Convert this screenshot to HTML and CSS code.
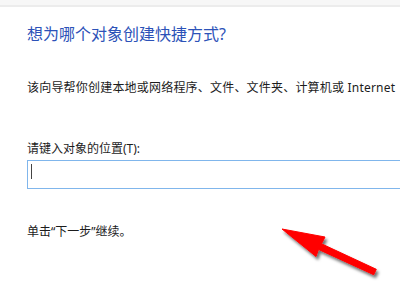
FILE: index.html
```html
<!DOCTYPE html>
<html lang="zh-CN">
<head>
    <meta charset="UTF-8">
    <title>创建快捷方式</title>
    <link rel="stylesheet" href="styles.css">
</head>
<body>
    <div class="topband"></div>

    <div class="wizard">
        <h1 class="heading">想为哪个对象创建快捷方式?</h1>

        <p class="desc">该向导帮你创建本地或网络程序、文件、文件夹、计算机或 Internet</p>

        <label class="field-label">请键入对象的位置(T):</label>
        <div class="location">
            <span class="caret"></span>
        </div>

        <p class="hint">单击“下一步”继续。</p>
    </div>

    <svg class="arrow" width="400" height="300" viewBox="0 0 400 300">
        <defs>
            <filter id="shadow" x="-20%" y="-20%" width="150%" height="160%">
                <feDropShadow dx="2" dy="3" stdDeviation="1.6" flood-color="#000" flood-opacity="0.55"/>
            </filter>
        </defs>
        <polygon points="282,229 325,237 321.5,243.8 376.3,269.3 373.7,274.7 318.5,249.4 316,256.5"
                 fill="#ff0000" stroke="#ff0000" stroke-width="1" stroke-linejoin="round" filter="url(#shadow)"/>
    </svg>
</body>
</html>
```

FILE: styles.css
```css
html, body {
    margin: 0;
    padding: 0;
    background: #fff;
    overflow: hidden;
}

body {
    width: 400px;
    height: 300px;
    font-family: "Noto Sans", "Noto Sans CJK SC", sans-serif;
    color: #1c1c1c;
}

.topband {
    height: 5px;
    background: #f7f7f7;
    border-bottom: 2px solid #ececec;
}

.wizard {
    padding: 15px 0 0 27px;
    white-space: nowrap;
}

.heading {
    margin: 0;
    font-size: 16px;
    font-weight: normal;
    line-height: 24px;
    color: #2c52b8;
}

.desc {
    margin: 33px 0 0 0;
    font-size: 12px;
    line-height: 18px;
    letter-spacing: 0.2px;
}

.field-label {
    display: block;
    margin-top: 43px;
    font-size: 12px;
    line-height: 18px;
}

.location {
    margin-top: 2px;
    height: 27px;
    border: 1px solid #80b6ec;
    border-right: none;
    position: relative;
}

.caret {
    position: absolute;
    left: 3px;
    top: 3px;
    width: 1px;
    height: 15px;
    background: #444;
}

.hint {
    margin: 34px 0 0 0;
    font-size: 12px;
    line-height: 18px;
}

.arrow {
    position: absolute;
    left: 0;
    top: 0;
}
```
